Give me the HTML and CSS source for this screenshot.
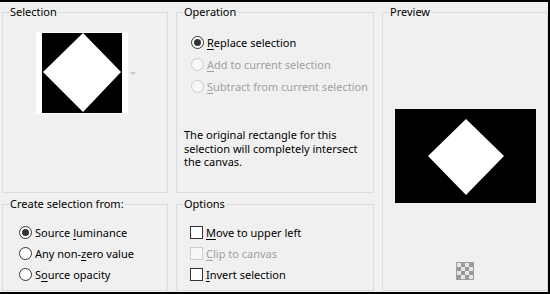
FILE: index.html
```html
<!DOCTYPE html>
<html lang="en">
<head>
  <meta charset="UTF-8"/>
  <title>Selection From Mask</title>
  <link rel="stylesheet" href="styles.css">
</head>
<body>
  <div class="dialog">
    <fieldset class="group selection">
      <legend>Selection</legend>
      <div class="thumb-row">
        <div class="thumb">
          <svg viewBox="0 0 80 80" width="80" height="80">
            <rect width="80" height="80" fill="#000"/>
            <polygon points="41,0 79,39 41,79 1,39" fill="#fff"/>
          </svg>
        </div>
        <span class="drop-arrow"></span>
      </div>
    </fieldset>

    <fieldset class="group operation">
      <legend>Operation</legend>
      <div class="choices">
        <div class="choice"><span class="radio checked"></span><span><u>R</u>eplace selection</span></div>
        <div class="choice disabled"><span class="radio"></span><span><u>A</u>dd to current selection</span></div>
        <div class="choice disabled"><span class="radio"></span><span><u>S</u>ubtract from current selection</span></div>
      </div>
      <p class="note">The original rectangle for this<br>selection will completely intersect<br>the canvas.</p>
    </fieldset>

    <fieldset class="group preview">
      <legend>Preview</legend>
      <div class="preview-box">
        <svg viewBox="0 0 141 94" width="141" height="94">
          <rect width="141" height="94" fill="#000"/>
          <polygon points="71,10 109,47 71,86 33,47" fill="#fff"/>
        </svg>
      </div>
      <button class="checker-btn"><span class="checker"></span></button>
    </fieldset>

    <fieldset class="group create">
      <legend>Create selection from:</legend>
      <div class="choices">
        <div class="choice"><span class="radio checked"></span><span>Source <u>l</u>uminance</span></div>
        <div class="choice"><span class="radio"></span><span>Any non-<u>z</u>ero value</span></div>
        <div class="choice"><span class="radio"></span><span>S<u>o</u>urce opacity</span></div>
      </div>
    </fieldset>

    <fieldset class="group options">
      <legend>Options</legend>
      <div class="choices">
        <div class="choice"><span class="check"></span><span><u>M</u>ove to upper left</span></div>
        <div class="choice disabled"><span class="check"></span><span><u>C</u>lip to canvas</span></div>
        <div class="choice"><span class="check"></span><span><u>I</u>nvert selection</span></div>
      </div>
    </fieldset>
  </div>
</body>
</html>
```

FILE: styles.css
```css
* {
  box-sizing: border-box;
}

html, body {
  margin: 0;
  width: 550px;
  height: 294px;
  overflow: hidden;
}

body {
  background: #f0f0f0;
  color: #000;
  font-family: "Noto Sans", "Open Sans", sans-serif;
  font-size: 11px;
  border-top: 2px solid #000;
  border-right: 2px solid #000;
  border-bottom: 2px solid #000;
  padding: 3px 0 1px 2px;
}

.dialog {
  display: grid;
  grid-template-columns: 166px 198px 166px;
  grid-template-rows: 188px 94px;
  column-gap: 8px;
  row-gap: 4px;
}

.group {
  margin: 0;
  padding: 0;
  min-width: 0;
  border: 1px solid #dcdcdc;
}

.group legend {
  margin-left: 6px;
  padding: 0 1px;
  line-height: 14px;
}

.preview {
  grid-column: 3;
  grid-row: 1 / 3;
  display: flex;
  flex-direction: column;
  align-items: center;
}

/* Selection thumbnail */
.thumb-row {
  display: flex;
  align-items: center;
  margin: 13px 0 0 33px;
}

.thumb {
  width: 92px;
  height: 82px;
  background: #fff;
  padding: 1px 6px;
}

.thumb svg {
  display: block;
}

.drop-arrow {
  margin-left: 2px;
  width: 0;
  height: 0;
  border-left: 3px solid transparent;
  border-right: 3px solid transparent;
  border-top: 3px solid #c4c4c4;
}

/* Radio buttons and checkboxes */
.choices {
  display: flex;
  flex-direction: column;
}

.operation .choices {
  padding: 12px 0 0 14px;
}

.operation .choice {
  height: 22px;
}

.create .choices {
  padding: 11px 0 0 16px;
}

.options .choices {
  padding: 11px 0 0 13px;
}

.create .choice, .options .choice {
  height: 21px;
}

.choice {
  display: flex;
  align-items: center;
  gap: 3px;
  white-space: nowrap;
}

.choice u {
  text-underline-offset: 2px;
}

.radio {
  width: 13px;
  height: 13px;
  border: 1px solid #333;
  border-radius: 50%;
  background: #fff;
  display: flex;
  align-items: center;
  justify-content: center;
  flex: none;
}

.radio.checked::after {
  content: "";
  width: 7px;
  height: 7px;
  border-radius: 50%;
  background: #333;
}

.check {
  width: 13px;
  height: 13px;
  border: 1px solid #333;
  background: #fff;
  flex: none;
}

.disabled {
  color: #a0a0a0;
}

.disabled .radio, .disabled .check {
  border-color: #cccccc;
  background: #f7f7f7;
}

.note {
  margin: 31px 0 0 7px;
  line-height: 13.5px;
  white-space: nowrap;
}

/* Preview */
.preview-box {
  margin-top: 90px;
}

.preview-box svg {
  display: block;
}

.checker-btn {
  margin-top: 59px;
  width: 18px;
  height: 18px;
  padding: 0;
  border: 1px solid #a0a0a0;
  background: #fff;
}

.checker {
  display: block;
  width: 16px;
  height: 16px;
  background: repeating-conic-gradient(#9a9a9a 0% 25%, #e6e6e6 0% 50%) 0 0 / 8px 8px;
}
```
